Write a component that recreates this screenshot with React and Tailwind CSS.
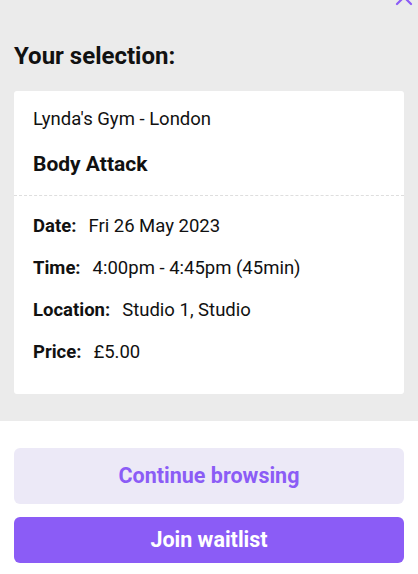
export default function App() {
  const details = [
    { label: "Date:", value: "Fri 26 May 2023" },
    { label: "Time:", value: "4:00pm - 4:45pm (45min)" },
    { label: "Location:", value: "Studio 1, Studio" },
    { label: "Price:", value: "£5.00" },
  ];

  return (
    <div
      className="w-[418px] h-[574px] overflow-hidden bg-white relative"
      style={{ fontFamily: "Roboto, 'Liberation Sans', sans-serif" }}
    >
      {/* close icon, cut off at the top */}
      <svg
        className="absolute left-[394px] top-[-12px]"
        width="20"
        height="18"
        viewBox="0 0 20 18"
      >
        <path
          d="M3 16 L17 2 M17 16 L3 2"
          stroke="#8b5cf6"
          strokeWidth="2.2"
          strokeLinecap="round"
          fill="none"
        />
      </svg>

      {/* summary */}
      <div className="bg-[#ebebeb] px-[14px] pt-[41px] pb-[27px]">
        <h2 className="text-[24px] leading-[30px] font-bold text-[#111]">
          Your selection:
        </h2>

        <div className="mt-[20px] bg-white rounded-[3px]">
          <div className="px-[19px] pt-[16px] pb-[17px] border-b border-dashed border-[#dedede]">
            <div className="text-[18.5px] leading-[24px] text-[#111]">
              Lynda's Gym - London
            </div>
            <div className="mt-[19px] text-[21px] leading-[28px] font-bold text-[#111]">
              Body Attack
            </div>
          </div>

          <div className="px-[19px] pt-[18px] pb-[30px] flex flex-col gap-[18px]">
            {details.map((d) => (
              <div
                key={d.label}
                className="flex gap-[12px] text-[18.5px] leading-[24px] text-[#111]"
              >
                <span className="font-bold">{d.label}</span>
                <span>{d.value}</span>
              </div>
            ))}
          </div>
        </div>
      </div>

      {/* actions */}
      <div className="px-[14px] pt-[27px] flex flex-col gap-[13px]">
        <button className="h-[56px] w-full rounded-[6px] bg-[#ece9f7] text-[#8b5cf6] text-[21.5px] font-bold">
          Continue browsing
        </button>
        <button className="h-[46px] w-full rounded-[6px] bg-[#8b5cf6] text-white text-[21.5px] font-bold">
          Join waitlist
        </button>
      </div>
    </div>
  );
}
